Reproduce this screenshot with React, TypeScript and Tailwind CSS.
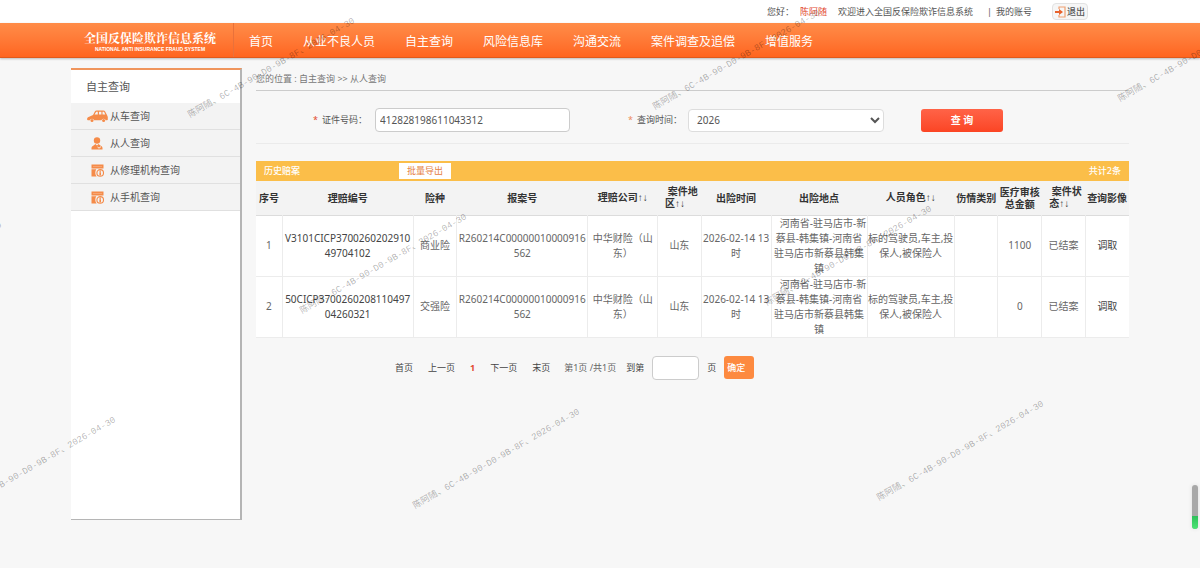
import clsx from "clsx";
import type { ReactNode } from "react";

const NAV = ["首页", "从业不良人员", "自主查询", "风险信息库", "沟通交流", "案件调查及追偿", "增值服务"];

const CarIcon = () => (
  <svg viewBox="0 0 21 12" className="w-[21px] h-3" fill="#f58b49">
    <path
      fillRule="evenodd"
      d="M1 7.2 6 5 8 1.2Q8.500.4 9.500.4h7q1 0 1.500.8L20 5l.8 2v2.500q0 .8-.8.8h-1.200a2.300 2.300 0 0 0-4.400 0H7.200a2.300 2.300 0 0 0-4.400 0H1q-1 0-.9-1.200Q.1 7.700 1 7.200ZM7.600 4.600h3.200V1.800H9.200ZM12 4.600h2.400V1.800H12ZM15.500 4.600h2.800L17 1.800h-1.500Z"
    />
    <circle cx="5" cy="10.400" r="1.500" />
    <circle cx="16.600" cy="10.400" r="1.500" />
  </svg>
);

const PersonIcon = () => (
  <svg viewBox="0 0 12 13" className="w-3 h-[13px]" fill="#f58b49">
    <circle cx="6" cy="3.500" r="3.200" />
    <path d="M.5 12.500v-1.800Q.6 9 2.600 8.400L4.400 7 6 8.600 7.600 7l1.800 1.400q2 .6 2.100 2.300v1.800Z" />
    <path d="m6.500 10 1.500 1.200L10 9.600" stroke="#f3f3f3" fill="none" />
  </svg>
);

const ShopIcon = () => (
  <svg viewBox="0 0 13 13" className="w-[13px] h-[13px]" fill="#f58b49">
    <path d="M.5.500h12v4H.5ZM.5 5.200h4.800Q4.200 7 4.300 9q.1 2 1.300 3.500H.5Z" />
    <circle cx="9.200" cy="8.900" r="3.300" fill="#f3f3f3" stroke="#f58b49" strokeWidth="1.100" />
    <path d="M9.200 6.500v1.200M9.200 8.300v3.200" stroke="#f58b49" strokeWidth="1.600" />
    <path d="M2 2.500h9" stroke="#f9b78e" strokeWidth=".6" />
  </svg>
);

const MENU = [
  { label: "从车查询", icon: <CarIcon /> },
  { label: "从人查询", icon: <PersonIcon /> },
  { label: "从修理机构查询", icon: <ShopIcon /> },
  { label: "从手机查询", icon: <ShopIcon /> },
];

const SortArrows = () => <span className="font-['Liberation_Sans',sans-serif] font-normal">↑↓</span>;

const SortTitle = ({ first, second }: { first: string; second: string }) => (
  <span className="inline-block pl-1 text-left">
    &nbsp;{first}
    <br />
    {second}
    <SortArrows />
  </span>
);

const COLUMNS: { title: ReactNode; width: string }[] = [
  { title: "序号", width: "w-[3%]" },
  { title: "理赔编号", width: "w-[15%]" },
  { title: "险种", width: "w-[5%]" },
  { title: "报案号", width: "w-[15%]" },
  { title: <>理赔公司<SortArrows /></>, width: "w-[8%]" },
  { title: <SortTitle first="案件地" second="区" />, width: "w-[5%]" },
  { title: "出险时间", width: "w-[8%]" },
  { title: "出险地点", width: "w-[11%]" },
  { title: <>人员角色<SortArrows /></>, width: "w-[10%]" },
  { title: "伤情类别", width: "w-[5%]" },
  { title: "医疗审核总金额", width: "w-[5%]" },
  { title: <SortTitle first="案件状" second="态" />, width: "w-[5%]" },
  { title: "查询影像", width: "w-[5%]" },
];

const ADDRESS = "\u00a0\u00a0\u00a0河南省-驻马店市-新蔡县-韩集镇-河南省驻马店市新蔡县韩集镇";
const ROLES = "标的驾驶员,车主,投保人,被保险人";

const ROWS = [
  ["1", "V3101CICP370026020291049704102", "商业险", "R260214C00000010000916562", "中华财险（山东）", "山东", "2026-02-14 13时", ADDRESS, ROLES, "", "1100", "已结案", "调取"],
  ["2", "50CICP370026020811049704260321", "交强险", "R260214C00000010000916562", "中华财险（山东）", "山东", "2026-02-14 13时", ADDRESS, ROLES, "", "0", "已结案", "调取"],
];

const WATERMARKS = [
  "left-[189px] top-[110px]",
  "left-[654px] top-[102px]",
  "left-[1119px] top-[94px]",
  "left-[-164px] top-[314px]",
  "left-[301px] top-[306px]",
  "left-[766px] top-[298px]",
  "left-[-50px] top-[509px]",
  "left-[414px] top-[501px]",
  "left-[878px] top-[493px]",
];

const TopBar = () => (
  <div className="bg-white">
    <div className="mx-auto flex h-[23px] max-w-[1058px] items-center justify-end pr-[41px] text-[9px] text-[#555]">
      <span>您好：</span>
      <a href="#" className="ml-1.5 text-[#e2492f]">陈阿随</a>
      <span className="ml-[11px]">欢迎进入全国反保险欺诈信息系统</span>
      <span className="ml-[14px]">|</span>
      <a href="#" className="ml-1">我的账号</a>
      <button className="ml-5 flex h-[17px] items-center rounded-sm border border-[#e2e2e2] bg-[#f6f6f6] px-0.5 font-medium">
        <svg viewBox="0 0 12 12" className="h-3 w-3" fill="none">
          <path d="M4 3V1h6v10H4V9" stroke="#f0a070" strokeWidth="1.200" />
          <path d="M0 5h4V3l4 3-4 3V7H0Z" fill="#e8622c" />
        </svg>
        退出
      </button>
    </div>
  </div>
);

const Header = () => (
  <header className="border-b border-[#e05a1c] bg-linear-to-b from-[#ff8c48] to-[#ff651f] shadow-[0_1px_2px_#bbb]">
    <div className="mx-auto flex h-[34px] max-w-[1058px] items-stretch text-white">
      <div className="flex w-[163px] flex-col items-center justify-center border-r border-[#e9713a] pt-1 pr-1">
        <div className="font-['Noto_Serif_CJK_SC','Noto_Sans_CJK_SC',serif] text-[12px] leading-[14px] font-bold">全国反保险欺诈信息系统</div>
        <div className="font-['Liberation_Sans_Narrow','Liberation_Sans',sans-serif] text-[5px] leading-[8px] font-bold whitespace-nowrap">
          NATIONAL ANTI INSURANCE FRAUD SYSTEM
        </div>
      </div>
      <nav className="flex items-center gap-[30px] pt-[3px] pl-[15px] text-[12px] whitespace-nowrap">
        {NAV.map((item) => (
          <a key={item} href="#">{item}</a>
        ))}
      </nav>
    </div>
  </header>
);

const Sidebar = () => (
  <aside className="h-[452px] w-[171px] shrink-0 border-t-2 border-r-2 border-b border-t-[#f0955c] border-r-[#b5b5b5] border-b-[#b5b5b5] bg-white">
    <h2 className="flex h-[33px] items-center pl-[15px] text-[11px]">自主查询</h2>
    <ul>
      {MENU.map((item) => (
        <li key={item.label} className="border-b border-[#e0e0e0] bg-[#f3f3f3]">
          <a href="#" className="flex h-[26px] items-center gap-0.5 pl-[15px]">
            <span className="flex w-[22px] justify-center">{item.icon}</span>
            {item.label}
          </a>
        </li>
      ))}
    </ul>
  </aside>
);

const SearchForm = () => (
  <form className="flex h-[53px] items-center border-b border-[#ebebeb] pt-[6px] pl-[57px]" onSubmit={(e) => e.preventDefault()}>
    <label htmlFor="idNo" className="w-[62px] text-[9px]">
      <span className="mr-1 text-[#e2492f]">*</span>证件号码：
    </label>
    <input id="idNo" defaultValue="412828198611043312" className="h-6 w-[195px] rounded-sm border border-[#ccc] bg-white px-1" />
    <label htmlFor="year" className="ml-[58px] w-[60px] text-[9px]">
      <span className="mr-1 text-[#ee8a5c]">*</span>查询时间：
    </label>
    <select id="year" defaultValue="2026" className="h-[23px] w-[196px] rounded-sm border border-[#ddd] bg-white px-1">
      <option>2026</option>
      <option>2025</option>
    </select>
    <button className="ml-[37px] h-[23px] w-[82px] rounded-[3px] bg-linear-to-b from-[#ff6347] to-[#fb4423] font-bold text-white">查 询</button>
  </form>
);

const ResultTable = () => (
  <section className="mt-[17px]">
    <div className="flex h-5 items-center bg-[#fbbe49] px-2 text-[9px] text-white">
      <h3 className="w-[135px] font-medium">历史赔案</h3>
      <button className="h-4 w-[52px] bg-white text-[#e5803f]">批量导出</button>
      <span className="ml-auto font-medium">共计2条</span>
    </div>
    <table className="w-full table-fixed text-center">
      <thead className="bg-[#f3f3f3] text-[#333]">
        <tr className="h-[34px] border-b border-[#dcdcdc] leading-3">
          {COLUMNS.map((col, i) => (
            <th key={i} className={clsx(col.width, "p-0 font-bold")}>{col.title}</th>
          ))}
        </tr>
      </thead>
      <tbody className="bg-white">
        {ROWS.map((row) => (
          <tr key={row[0]} className="h-[61px] border-b border-[#ececec] leading-[15px]">
            {row.map((cell, i) => (
              <td key={i} className={clsx("border-r border-[#ececec] p-0 break-all last:border-r-0", i === 1 || i === 12 ? "text-[#444]" : "text-[#666]")}>
                {i === 12 ? <a href="#">{cell}</a> : cell}
              </td>
            ))}
          </tr>
        ))}
      </tbody>
    </table>
  </section>
);

const Pager = () => (
  <div className="mt-[18px] flex items-center pl-[139px] text-[9px] text-[#444]">
    <a href="#">首页</a>
    <a href="#" className="ml-[15px]">上一页</a>
    <span className="ml-[15px] font-bold text-[#e2492f]">1</span>
    <a href="#" className="ml-[15px]">下一页</a>
    <a href="#" className="ml-[15px]">末页</a>
    <span className="ml-[14px] text-[#666]">第1页 /共1页</span>
    <label htmlFor="page" className="ml-[10px]">到第</label>
    <input id="page" className="mx-2 h-6 w-[47px] rounded-sm border border-[#ccc] bg-white px-1" />
    <span>页</span>
    <button className="ml-2 h-[23px] w-[30px] rounded-[3px] bg-[#fd8a40] pl-[3px] text-left font-medium text-white">确定</button>
  </div>
);

export default function App() {
  return (
    <div className="relative min-h-screen overflow-hidden bg-[#f7f7f7] font-['Noto_Sans','Noto_Sans_CJK_SC',sans-serif] text-[10px] leading-3 text-[#555]">
      <TopBar />
      <Header />
      <div className="mx-auto flex max-w-[1058px] gap-[14px] pt-[10px]">
        <Sidebar />
        <main className="min-w-0 flex-1">
          <div className="flex h-[23px] items-center border-b border-[#ccc] text-[9px] text-[#777]">您的位置 : 自主查询 &gt;&gt; 从人查询</div>
          <SearchForm />
          <ResultTable />
          <Pager />
        </main>
      </div>

      {/* watermark */}
      <div className="pointer-events-none absolute inset-0 overflow-hidden font-['Liberation_Mono','Noto_Sans_CJK_SC',monospace] text-[9px] text-black/30">
        {WATERMARKS.map((pos) => (
          <span key={pos} className={clsx("absolute origin-left -rotate-30 whitespace-nowrap", pos)}>
            陈阿随、6C-4B-90-D0-9B-8F、2026-04-30
          </span>
        ))}
      </div>

      <div className="absolute right-0.5 bottom-[39px] h-11 w-1.5 overflow-hidden rounded-full bg-[#a8a8a8] shadow-[0_0_4px_#ddd]">
        <div className="mt-[31px] h-[13px] bg-linear-to-b from-[#2fbf5a] to-[#4be674]" />
      </div>
    </div>
  );
}
